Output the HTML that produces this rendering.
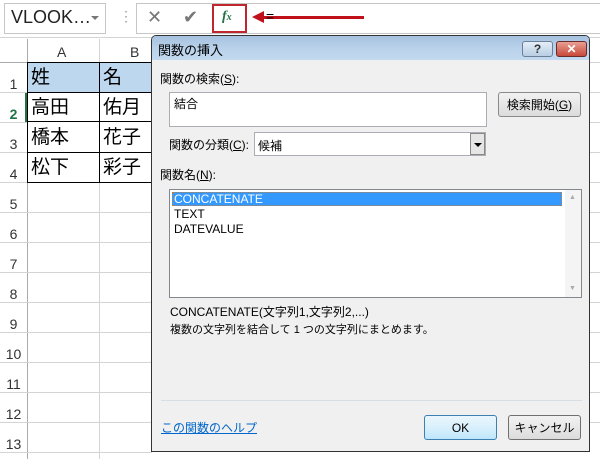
<!DOCTYPE html><html><head><meta charset="utf-8"><style>
*{margin:0;padding:0;box-sizing:border-box}
body{width:600px;height:457px;overflow:hidden;background:#fff;position:relative;font-family:"Liberation Sans","Noto Sans CJK JP",sans-serif}
.a{position:absolute}
.hl{position:absolute;height:1px;background:#d4d4d4}
.vl{position:absolute;width:1px;background:#d4d4d4}
.rn{position:absolute;left:0;width:27px;text-align:center;font-size:14px;color:#333}
.c{position:absolute;font-size:19px;color:#000;padding-left:3px;line-height:30px;font-family:"Noto Sans CJK JP",sans-serif}
.t{font-size:12px;color:#000;font-family:"Liberation Sans","Noto Sans CJK JP",sans-serif}
</style></head><body>
<div class="a" style="left:0;top:0;width:600px;height:38px;background:#fff;border-bottom:1px solid #d4d4d4"></div>
<div class="a" style="left:4px;top:3px;width:102px;height:31px;border:1px solid #c6c6c6"></div>
<div class="a" style="left:11px;top:7px;font-size:18px;color:#222">VLOOK…</div>
<div class="a" style="left:91px;top:16px;width:0;height:0;border-left:4px solid transparent;border-right:4px solid transparent;border-top:4px solid #777"></div>
<div class="a" style="left:119px;top:8px;color:#999;font-size:14px">⋮</div>
<div class="a" style="left:136px;top:3px;width:464px;height:31px;border:1px solid #c6c6c6;border-right:none"></div>
<div class="a" style="left:147px;top:7px;color:#777;font-size:18px">✕</div>
<div class="a" style="left:183px;top:7px;color:#777;font-size:18px">✔</div>
<div class="a" style="left:212px;top:4px;width:35px;height:29px;border:2px solid #c0262d;background:#fff"></div>
<div class="a" style="left:222px;top:9px;color:#217346;font-style:italic;font-family:'Liberation Serif',serif;font-size:14px;font-weight:bold">f<span style="font-size:10px">x</span></div>
<div class="a" style="left:252px;top:11px;width:0;height:0;border-top:6px solid transparent;border-bottom:6px solid transparent;border-right:12px solid #c0101a"></div>
<div class="a" style="left:262px;top:16px;width:102px;height:3px;background:#c0101a"></div>
<div class="a" style="left:266px;top:8px;font-size:14px">=</div>
<div class="a" style="left:0;top:39px;width:600px;height:24px;background:#fff"></div>
<div class="a" style="left:57px;top:44px;font-size:14px;color:#333">A</div>
<div class="a" style="left:130px;top:44px;font-size:14px;color:#333">B</div>
<div class="a" style="left:0;top:92px;width:27px;height:30px;border-right:2px solid #217346"></div>
<div class="vl" style="left:27px;top:39px;height:420px;background:#ababab"></div>
<div class="hl" style="left:0;top:62px;width:152px;background:#ababab"></div>
<div class="vl" style="left:99px;top:39px;height:420px"></div>
<div class="hl" style="left:0;top:92px;width:28px"></div><div class="hl" style="left:0;top:122px;width:28px"></div><div class="hl" style="left:0;top:152px;width:28px"></div><div class="hl" style="left:0;top:182px;width:28px"></div>
<div class="hl" style="left:0;top:212px;width:152px"></div><div class="hl" style="left:0;top:242px;width:152px"></div><div class="hl" style="left:0;top:272px;width:152px"></div><div class="hl" style="left:0;top:302px;width:152px"></div><div class="hl" style="left:0;top:332px;width:152px"></div><div class="hl" style="left:0;top:362px;width:152px"></div><div class="hl" style="left:0;top:392px;width:152px"></div><div class="hl" style="left:0;top:422px;width:152px"></div><div class="hl" style="left:0;top:452px;width:152px"></div>
<div class="hl" style="left:590px;top:62px;width:10px"></div><div class="hl" style="left:590px;top:92px;width:10px"></div><div class="hl" style="left:590px;top:122px;width:10px"></div><div class="hl" style="left:590px;top:152px;width:10px"></div><div class="hl" style="left:590px;top:182px;width:10px"></div><div class="hl" style="left:590px;top:212px;width:10px"></div><div class="hl" style="left:590px;top:242px;width:10px"></div><div class="hl" style="left:590px;top:272px;width:10px"></div><div class="hl" style="left:590px;top:302px;width:10px"></div><div class="hl" style="left:590px;top:332px;width:10px"></div><div class="hl" style="left:590px;top:362px;width:10px"></div><div class="hl" style="left:590px;top:392px;width:10px"></div><div class="hl" style="left:590px;top:422px;width:10px"></div>
<div class="a" style="left:28px;top:62px;width:124px;height:30px;background:#bdd7ee"></div>
<div class="a" style="left:27px;top:62px;width:73px;height:121px;border:1px solid #000"></div>
<div class="a" style="left:99px;top:62px;width:53px;height:121px;border:1px solid #000;border-left:none"></div>
<div class="a" style="left:27px;top:92px;width:125px;height:30px;border-top:1px solid #000;border-bottom:1px solid #000"></div>
<div class="a" style="left:27px;top:152px;width:125px;height:1px;background:#000"></div>
<div class="c" style="left:28px;top:61px">姓</div><div class="c" style="left:100px;top:61px">名</div>
<div class="c" style="left:28px;top:91px">高田</div><div class="c" style="left:100px;top:91px">佑月</div>
<div class="c" style="left:28px;top:121px">橋本</div><div class="c" style="left:100px;top:121px">花子</div>
<div class="c" style="left:28px;top:151px">松下</div><div class="c" style="left:100px;top:151px">彩子</div>
<div class="rn" style="top:76px">1</div><div class="rn" style="top:106px;color:#217346;font-weight:bold">2</div><div class="rn" style="top:136px">3</div><div class="rn" style="top:166px">4</div>
<div class="rn" style="top:196px">5</div><div class="rn" style="top:226px">6</div><div class="rn" style="top:256px">7</div><div class="rn" style="top:286px">8</div><div class="rn" style="top:316px">9</div><div class="rn" style="top:346px">10</div><div class="rn" style="top:376px">11</div><div class="rn" style="top:406px">12</div><div class="rn" style="top:436px">13</div>
<div class="a" style="left:151px;top:35px;width:439px;height:417px;background:#f0f0f0;border:1px solid #333;border-radius:5px 5px 0 0;overflow:hidden">
<div class="a" style="left:0;top:0;width:437px;height:24px;background:linear-gradient(#a6c2e0,#b9d1ea 50%,#c2d9f0)"></div>
<div class="a t" style="left:6px;top:4px;font-size:13px">関数の挿入</div>
<div class="a" style="left:370px;top:5px;width:31px;height:16px;border:1px solid #6b7f96;border-radius:3px;background:linear-gradient(#e4eef8,#b8cde3);text-align:center;font-size:12px;line-height:14px;font-weight:bold;color:#333">?</div>
<div class="a" style="left:404px;top:5px;width:31px;height:16px;border:1px solid #6b2a2a;border-radius:3px;background:linear-gradient(#e8a093,#c7483a);text-align:center;font-size:12px;line-height:14px;font-weight:bold;color:#fff">✕</div>
<div class="a t" style="left:8px;top:34px">関数の検索(<u>S</u>):</div>
<div class="a" style="left:17px;top:56px;width:318px;height:35px;background:#fff;border:1px solid #abadb3"></div>
<div class="a t" style="left:22px;top:59px">結合</div>
<div class="a" style="left:346px;top:56px;width:83px;height:25px;border:1px solid #8a8a8a;border-radius:3px;background:linear-gradient(#f2f2f2,#dcdcdc);text-align:center;line-height:23px"><span class="t">検索開始(<u>G</u>)</span></div>
<div class="a t" style="left:17px;top:100px">関数の分類(<u>C</u>):</div>
<div class="a" style="left:102px;top:96px;width:232px;height:24px;background:#fff;border:1px solid #abadb3"></div>
<div class="a t" style="left:106px;top:101px">候補</div>
<div class="a" style="left:318px;top:97px;width:15px;height:22px;background:#e5e5e5;border:1px solid #888"></div>
<div class="a" style="left:322px;top:107px;width:0;height:0;border-left:4px solid transparent;border-right:4px solid transparent;border-top:4px solid #000"></div>
<div class="a t" style="left:8px;top:130px">関数名(<u>N</u>):</div>
<div class="a" style="left:17px;top:153px;width:413px;height:109px;background:#fff;border:1px solid #828790"></div>
<div class="a" style="left:20px;top:156px;width:390px;height:14px;background:#3399ff;border:1px dotted #c08040"></div>
<div class="a t" style="left:22px;top:156px;color:#fff">CONCATENATE</div>
<div class="a t" style="left:22px;top:171px">TEXT</div>
<div class="a t" style="left:22px;top:186px">DATEVALUE</div>
<div class="a" style="left:413px;top:154px;width:16px;height:107px;background:#f4f4f4"></div>
<div class="a" style="left:417px;top:158px;color:#aaa;font-size:7px">▲</div>
<div class="a" style="left:417px;top:249px;color:#aaa;font-size:7px">▼</div>
<div class="a t" style="left:18px;top:267px">CONCATENATE(文字列1,文字列2,...)</div>
<div class="a t" style="left:18px;top:285px;font-size:11px">複数の文字列を結合して 1 つの文字列にまとめます。</div>
<div class="a" style="left:9px;top:364px;width:421px;height:1px;background:#d5dfe5"></div>
<div class="a t" style="left:9px;top:383px;color:#0066cc;text-decoration:underline">この関数のヘルプ</div>
<div class="a" style="left:272px;top:379px;width:73px;height:25px;border:1px solid #3c7fb1;border-radius:3px;background:linear-gradient(#eaf6fd,#d9f0fc 50%,#bee6fd);text-align:center;line-height:23px"><span class="t">OK</span></div>
<div class="a" style="left:356px;top:379px;width:73px;height:25px;border:1px solid #707070;border-radius:3px;background:linear-gradient(#f2f2f2,#dcdcdc);text-align:center;line-height:23px"><span class="t">キャンセル</span></div>
</div>
</body></html>
